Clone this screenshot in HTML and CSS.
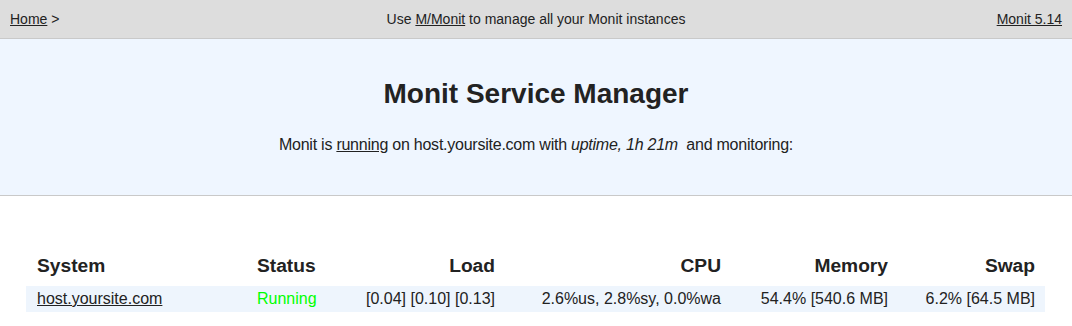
FILE: index.html
```html
<!DOCTYPE html>
<html lang="en">
<head>
    <meta charset="UTF-8">
    <meta name="viewport" content="width=device-width, initial-scale=1.0">
    <title>Monit: host.yoursite.com</title>
    <link rel="stylesheet" href="styles.css">
</head>
<body>
    <div class="nav">
        <div class="nav-left"><a href="#">Home</a> &gt;</div>
        <div class="nav-center">Use <a href="#">M/Monit</a> to manage all your Monit instances</div>
        <div class="nav-right"><a href="#">Monit 5.14</a></div>
    </div>

    <div class="hero">
        <h1>Monit Service Manager</h1>
        <p>Monit is <a href="#">running</a> on host.yoursite.com with <i>uptime, 1h 21m</i>&nbsp; and monitoring:</p>
    </div>

    <table class="status-table">
        <tr>
            <th class="col-system">System</th>
            <th class="col-status">Status</th>
            <th class="col-load right">Load</th>
            <th class="col-cpu right">CPU</th>
            <th class="col-mem right">Memory</th>
            <th class="col-swap right">Swap</th>
        </tr>
        <tr class="stripe">
            <td class="first"><a href="#">host.yoursite.com</a></td>
            <td class="green-text">Running</td>
            <td class="right">[0.04]&nbsp;[0.10]&nbsp;[0.13]</td>
            <td class="right">2.6%us,&nbsp;2.8%sy,&nbsp;0.0%wa</td>
            <td class="right">54.4% [540.6&nbsp;MB]</td>
            <td class="right">6.2% [64.5&nbsp;MB]</td>
        </tr>
    </table>
</body>
</html>
```

FILE: styles.css
```css
body {
    margin: 0;
    font-family: "Liberation Sans", Arial, sans-serif;
    color: #222;
    background-color: #fff;
}
a {
    color: #222;
    text-decoration: underline;
}
.nav {
    display: flex;
    align-items: center;
    height: 38px;
    padding: 0 10px;
    background-color: #ddd;
    border-bottom: 1px solid #c9c9c9;
    font-size: 14px;
    line-height: 16px;
}
.nav-left,
.nav-right {
    flex: 1;
}
.nav-right {
    text-align: right;
}
.nav-center {
    text-align: center;
}
.hero {
    background-color: #eff6ff;
    border-bottom: 1px solid #c9c9c9;
    padding: 39px 0 41px;
    text-align: center;
}
.hero h1 {
    margin: 0 0 26px;
    font-size: 28px;
    line-height: 32px;
    font-weight: bold;
}
.hero p {
    margin: 0;
    font-size: 16px;
    line-height: 18px;
    letter-spacing: -0.24px;
}
.status-table {
    width: 1019px;
    margin: 54px 0 0 26px;
    border-collapse: collapse;
    table-layout: fixed;
}
.status-table th {
    box-sizing: border-box;
    padding: 5px 10px 9px;
    font-size: 19.2px;
    line-height: 22px;
    text-align: left;
}
.status-table td {
    padding: 4px 10px;
    font-size: 16px;
    line-height: 18px;
    white-space: nowrap;
}
.status-table .col-system,
.status-table .first {
    padding-left: 11px;
}
.status-table .right {
    text-align: right;
}
.col-system { width: 221px; }
.col-status { width: 109px; }
.col-load { width: 149px; }
.col-cpu { width: 226px; }
.col-mem { width: 167px; }
.col-swap { width: 147px; }
.stripe {
    background-color: #eef5fd;
}
.green-text {
    color: #00ff00;
}
```
